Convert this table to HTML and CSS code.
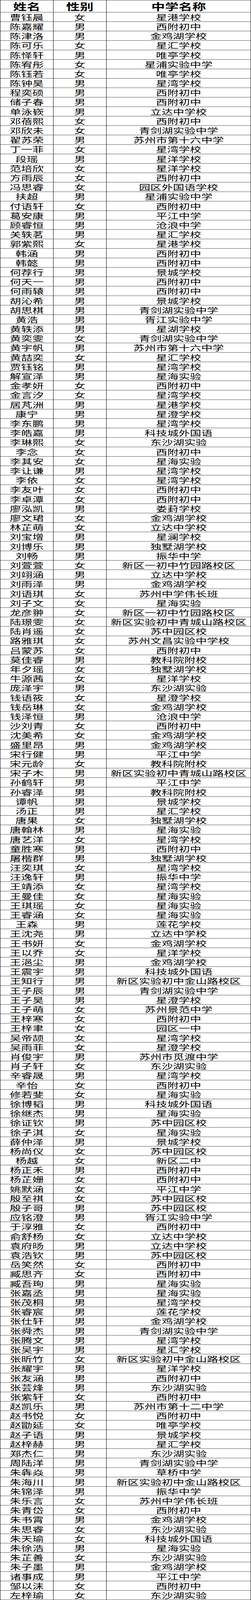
FILE: index.html
```html
<!DOCTYPE html>
<html lang="zh-CN">
<head>
<meta charset="utf-8">
<title>名单</title>
<link rel="stylesheet" href="styles.css">
</head>
<body>
<div class="frame">
<div class="sheet" role="table">
<div class="head">姓名</div><div class="head">性别</div><div class="head">中学名称</div>
<div>曹钰晨</div><div>女</div><div>星港学校</div>
<div>陈嘉耀</div><div>男</div><div>西附初中</div>
<div>陈津洛</div><div>男</div><div>金鸡湖学校</div>
<div>陈可乐</div><div>女</div><div>星汇学校</div>
<div>陈怿轩</div><div>男</div><div>唯亭学校</div>
<div>陈宥彤</div><div>女</div><div>星浦实验中学</div>
<div>陈钰若</div><div>女</div><div>唯亭学校</div>
<div>陈钟昊</div><div>男</div><div>星湾学校</div>
<div>程奕硕</div><div>男</div><div>西附初中</div>
<div>储子春</div><div>男</div><div>西附初中</div>
<div>单泳嵚</div><div>男</div><div>立达中学校</div>
<div>邓蓓熙</div><div>女</div><div>西附初中</div>
<div>邓欣未</div><div>女</div><div>青剑湖实验中学</div>
<div>翟苏荣</div><div>男</div><div>苏州市第十六中学</div>
<div>丁一菲</div><div>女</div><div>星湾学校</div>
<div>段瑶</div><div>男</div><div>星洋学校</div>
<div>范培欣</div><div>女</div><div>星洋学校</div>
<div>方雨辰</div><div>女</div><div>西附初中</div>
<div>冯思睿</div><div>女</div><div>园区外国语学校</div>
<div>扶超</div><div>男</div><div>星浦实验中学</div>
<div>付语轩</div><div>女</div><div>西附初中</div>
<div>葛安康</div><div>男</div><div>平江中学</div>
<div>顾睿恒</div><div>男</div><div>沧浪中学</div>
<div>关轶茗</div><div>男</div><div>星汇学校</div>
<div>郭紫熙</div><div>女</div><div>星港学校</div>
<div>韩涵</div><div>男</div><div>西附初中</div>
<div>韩懿</div><div>男</div><div>西附初中</div>
<div>何荐行</div><div>男</div><div>景城学校</div>
<div>何天一</div><div>男</div><div>西附初中</div>
<div>何雨辕</div><div>男</div><div>西附初中</div>
<div>胡沁希</div><div>男</div><div>景城学校</div>
<div>胡思棋</div><div>男</div><div>青剑湖实验中学</div>
<div>黄浩</div><div>男</div><div>胥江实验中学</div>
<div>黄轶添</div><div>男</div><div>星湖学校</div>
<div>黄奕雯</div><div>女</div><div>青剑湖实验中学</div>
<div>黄宇帆</div><div>男</div><div>苏州市第十六中学</div>
<div>黄喆奕</div><div>女</div><div>星汇学校</div>
<div>贾钰铭</div><div>男</div><div>星湾学校</div>
<div>解宣泽</div><div>男</div><div>星海实验</div>
<div>金孝妍</div><div>女</div><div>西附初中</div>
<div>金言汐</div><div>女</div><div>星湾学校</div>
<div>居芃洲</div><div>男</div><div>星港学校</div>
<div>康宁</div><div>男</div><div>星澄学校</div>
<div>李东鹏</div><div>男</div><div>星湾学校</div>
<div>李皓嘉</div><div>男</div><div>科技城外国语</div>
<div>李琳熙</div><div>女</div><div>东沙湖实验</div>
<div>李念</div><div>女</div><div>西附初中</div>
<div>李其安</div><div>女</div><div>星海实验</div>
<div>李让谦</div><div>男</div><div>星湾学校</div>
<div>李依</div><div>女</div><div>星湾学校</div>
<div>李友叶</div><div>女</div><div>西附初中</div>
<div>李卓潭</div><div>女</div><div>西附初中</div>
<div>廖泓凯</div><div>男</div><div>娄葑学校</div>
<div>廖文珺</div><div>女</div><div>金鸡湖学校</div>
<div>林芷萌</div><div>女</div><div>立达中学校</div>
<div>刘宝增</div><div>男</div><div>星澜学校</div>
<div>刘博乐</div><div>男</div><div>独墅湖学校</div>
<div>刘畅</div><div>男</div><div>振华中学</div>
<div>刘萱萱</div><div>女</div><div>新区一初中竹园路校区</div>
<div>刘翊涵</div><div>男</div><div>立达中学校</div>
<div>刘雨泽</div><div>男</div><div>金鸡湖学校</div>
<div>刘语琪</div><div>女</div><div>苏州中学伟长班</div>
<div>刘子文</div><div>女</div><div>星海实验</div>
<div>龙彦翀</div><div>女</div><div>新区一初中竹园路校区</div>
<div>陆璟雯</div><div>女</div><div>新区实验初中青城山路校区</div>
<div>陆肖遥</div><div>女</div><div>苏中园区校</div>
<div>路雅琪</div><div>女</div><div>苏州文昌实验中学校</div>
<div>吕蒙苏</div><div>女</div><div>西附初中</div>
<div>莫佳睿</div><div>男</div><div>教科院附校</div>
<div>年夕瑶</div><div>女</div><div>独墅湖学校</div>
<div>牛源茜</div><div>女</div><div>星洋学校</div>
<div>庞泽宇</div><div>男</div><div>东沙湖实验</div>
<div>钱语筱</div><div>女</div><div>星澄学校</div>
<div>钱岳琳</div><div>女</div><div>金鸡湖学校</div>
<div>钱泽恒</div><div>男</div><div>沧浪中学</div>
<div>沙刘青</div><div>女</div><div>西附初中</div>
<div>沈美希</div><div>女</div><div>金鸡湖学校</div>
<div>盛里昂</div><div>男</div><div>金鸡湖学校</div>
<div>宋行健</div><div>男</div><div>平江中学</div>
<div>宋元龄</div><div>女</div><div>教科院附校</div>
<div>宋子木</div><div>男</div><div>新区实验初中青城山路校区</div>
<div>孙鹤轩</div><div>男</div><div>平江中学</div>
<div>孙睿泽</div><div>男</div><div>教科院附校</div>
<div>谭帆</div><div>男</div><div>景城学校</div>
<div>汤正</div><div>男</div><div>星汇学校</div>
<div>唐果</div><div>女</div><div>独墅湖学校</div>
<div>唐翰林</div><div>男</div><div>星海实验</div>
<div>唐艺洋</div><div>女</div><div>星湾学校</div>
<div>童胜寒</div><div>男</div><div>西附初中</div>
<div>屠楷群</div><div>男</div><div>独墅湖学校</div>
<div>汪奕琪</div><div>女</div><div>星湾学校</div>
<div>汪逸轩</div><div>男</div><div>振华中学</div>
<div>王靖添</div><div>女</div><div>星湾学校</div>
<div>王曼佳</div><div>女</div><div>星海实验</div>
<div>王琪瑶</div><div>女</div><div>星海实验</div>
<div>王睿涵</div><div>女</div><div>星海实验</div>
<div>王森</div><div>男</div><div>莲花学校</div>
<div>王沈尧</div><div>男</div><div>立达中学校</div>
<div>王书妍</div><div>女</div><div>金鸡湖学校</div>
<div>王以乔</div><div>女</div><div>星洋学校</div>
<div>王浥尘</div><div>男</div><div>金鸡湖学校</div>
<div>王震宇</div><div>男</div><div>科技城外国语</div>
<div>王知行</div><div>男</div><div>新区实验初中金山路校区</div>
<div>王子辰</div><div>男</div><div>青剑湖实验中学</div>
<div>王子昊</div><div>男</div><div>星澄学校</div>
<div>王子萌</div><div>女</div><div>苏州景范中学</div>
<div>王梓寒</div><div>女</div><div>西附初中</div>
<div>王梓聿</div><div>女</div><div>园区一中</div>
<div>吴帝颉</div><div>女</div><div>星湾学校</div>
<div>吴雨菲</div><div>女</div><div>星澄学校</div>
<div>肖俊宇</div><div>男</div><div>苏州市觅渡中学</div>
<div>肖子轩</div><div>女</div><div>东沙湖实验</div>
<div>辛睿晟</div><div>男</div><div>星湾学校</div>
<div>辛怡</div><div>女</div><div>西附初中</div>
<div>修若斐</div><div>女</div><div>星海实验</div>
<div>徐博韬</div><div>男</div><div>科技城外国语</div>
<div>徐继杰</div><div>男</div><div>星海实验</div>
<div>徐证钦</div><div>男</div><div>苏中园区校</div>
<div>徐子淇</div><div>女</div><div>星海实验</div>
<div>薛仲泽</div><div>男</div><div>景城学校</div>
<div>杨尚仪</div><div>女</div><div>苏中园区校</div>
<div>杨越</div><div>女</div><div>新区二中</div>
<div>杨正禾</div><div>男</div><div>西附初中</div>
<div>杨芷姗</div><div>女</div><div>西附初中</div>
<div>姚默涵</div><div>女</div><div>平江中学</div>
<div>殷至祺</div><div>女</div><div>苏中园区校</div>
<div>殷子哥</div><div>男</div><div>苏中园区校</div>
<div>应铭澄</div><div>男</div><div>胥江实验中学</div>
<div>于淳雅</div><div>女</div><div>西附初中</div>
<div>俞舒杨</div><div>女</div><div>立达中学校</div>
<div>袁府旸</div><div>男</div><div>立达中学校</div>
<div>袁浩钦</div><div>男</div><div>苏中园区校</div>
<div>岳笑然</div><div>女</div><div>西附初中</div>
<div>臧思齐</div><div>女</div><div>西附初中</div>
<div>臧吾珣</div><div>男</div><div>星海实验</div>
<div>张嘉丞</div><div>男</div><div>星海实验</div>
<div>张茂桐</div><div>男</div><div>星湾学校</div>
<div>张睿宸</div><div>男</div><div>莲花学校</div>
<div>张仕轩</div><div>男</div><div>金鸡湖学校</div>
<div>张舜杰</div><div>男</div><div>青剑湖实验中学</div>
<div>张腾文</div><div>男</div><div>星湾学校</div>
<div>张吴宇</div><div>男</div><div>星汇学校</div>
<div>张昕竹</div><div>女</div><div>新区实验初中金山路校区</div>
<div>张耀宇</div><div>男</div><div>星洋学校</div>
<div>张友涵</div><div>男</div><div>西附初中</div>
<div>张芸烽</div><div>男</div><div>东沙湖实验</div>
<div>张紫轩</div><div>女</div><div>西附初中</div>
<div>赵凯乐</div><div>男</div><div>苏州市第十二中学</div>
<div>赵书悦</div><div>女</div><div>西附初中</div>
<div>赵勖延</div><div>女</div><div>唯亭学校</div>
<div>赵子语</div><div>男</div><div>景城学校</div>
<div>赵梓赫</div><div>男</div><div>星汇学校</div>
<div>郑杰仁</div><div>男</div><div>东沙湖实验</div>
<div>周陆洋</div><div>男</div><div>青剑湖实验中学</div>
<div>朱犇焱</div><div>男</div><div>草桥中学</div>
<div>朱海川</div><div>男</div><div>新区实验初中金山路校区</div>
<div>朱锦泽</div><div>男</div><div>振华中学</div>
<div>朱乐言</div><div>女</div><div>苏州中学伟长班</div>
<div>朱青岱</div><div>女</div><div>西附初中</div>
<div>朱书霄</div><div>男</div><div>金鸡湖学校</div>
<div>朱思睿</div><div>女</div><div>东沙湖实验</div>
<div>朱天瑜</div><div>女</div><div>科技城外国语</div>
<div>朱徐浩</div><div>男</div><div>星海实验</div>
<div>朱芷善</div><div>女</div><div>东沙湖实验</div>
<div>朱子墨</div><div>男</div><div>金鸡湖学校</div>
<div>诸事成</div><div>男</div><div>平江中学</div>
<div>邹以沫</div><div>女</div><div>西附初中</div>
<div>左梓瑜</div><div>女</div><div>东沙湖实验</div>
</div>
</div>
<script src="fit.js"></script>
</body>
</html>
```
FILE: styles.css
```css
:root {
  --fit: 1;
}

html, body {
  margin: 0;
  padding: 0;
  background: #ffffff;
}

.frame {
  height: 100vh;
  overflow: hidden;
}

.sheet {
  width: 643px;
  display: grid;
  grid-template-columns: 137px 136px 370px;
  grid-template-rows: 47px;
  grid-auto-rows: 36px;
  font-family: "Noto Sans CJK SC", "Noto Sans", sans-serif;
  color: #000000;
  transform-origin: 0 0;
  transform: scaleY(var(--fit));
}

.sheet > div {
  box-sizing: border-box;
  border-right: 1px solid #000000;
  border-bottom: 1px solid #000000;
  text-align: center;
  white-space: nowrap;
  font-size: 29px;
  line-height: 35px;
  font-weight: 400;
}

.sheet > div:nth-child(3n+1) {
  border-left: 1px solid #000000;
}

.sheet > .head {
  border-top: 1px solid #000000;
  font-size: 35px;
  line-height: 45px;
  font-weight: 700;
}
```
FILE: fit.js
```js
(function () {
  var sheet = document.querySelector('.sheet');
  var full = sheet.offsetHeight;
  var k = Math.min(1, window.innerHeight / full);
  document.documentElement.style.setProperty('--fit', String(k));
})();
```
